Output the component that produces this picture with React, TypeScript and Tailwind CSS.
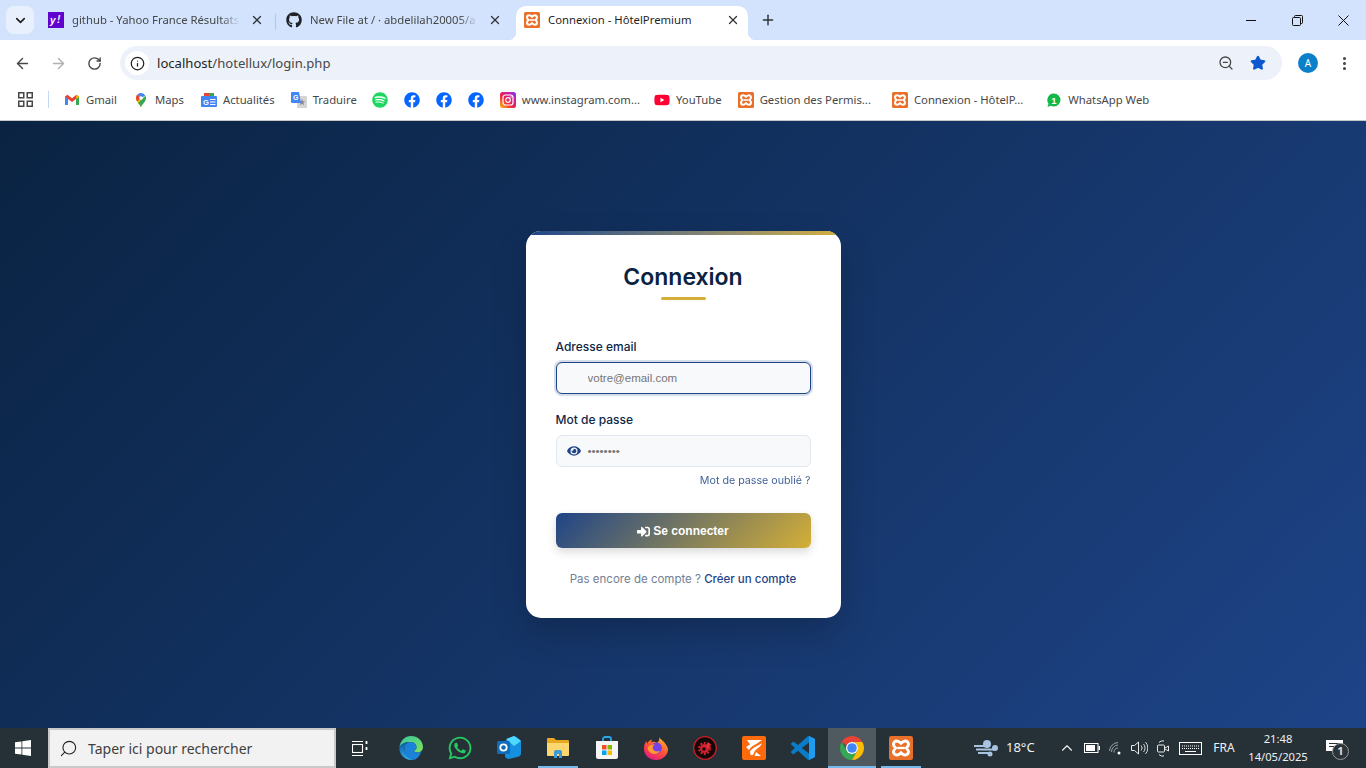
import { FaEye, FaSignInAlt, FaGithub, FaFacebook, FaSpotify, FaYoutube, FaWhatsapp } from "react-icons/fa";
import { ArrowLeft, ArrowRight, RotateCw, Info, Star, ZoomOut, ChevronDown, X, Plus, EllipsisVertical, ChevronUp, Search } from "lucide-react";

function Xampp({ size = 16 }: { size?: number }) {
  return (
    <svg width={size} height={size} viewBox="0 0 16 16" className="shrink-0">
      <rect width="16" height="16" rx="1.5" fill="#e8702a" />
      <path d="M5.2 3.3c-1.300 0-2.200 1-2.200 2.200 0 1 .6 1.700 1.400 2.500-.8.800-1.400 1.500-1.400 2.500 0 1.200.9 2.200 2.200 2.200 1 0 1.900-.7 2.800-1.500.9.800 1.800 1.500 2.800 1.500 1.300 0 2.200-1 2.200-2.200 0-1-.6-1.700-1.400-2.500.8-.8 1.400-1.500 1.400-2.500 0-1.200-.9-2.200-2.200-2.200-1 0-1.900.7-2.800 1.500-.9-.8-1.800-1.500-2.800-1.500z" fill="none" stroke="#fff" strokeWidth="2" />
      <path d="M5.500 8h5" stroke="#fff" strokeWidth="1.600" />
    </svg>
  );
}

function Gmail() {
  return (
    <svg width="16" height="16" viewBox="0 0 16 16" className="shrink-0">
      <path d="M1 4.500V13h3V7l4 3 4-3v6h3V4.500L12.500 2.800 8 6.200 3.500 2.800z" fill="#ea4335" />
      <path d="M1 4.500V13h3V7z" fill="#4285f4" />
      <path d="M15 4.500V13h-3V7z" fill="#34a853" />
      <path d="M15 4.500 12.500 2.800 12 7l3-2z" fill="#fbbc04" />
    </svg>
  );
}

function Maps() {
  return (
    <svg width="16" height="16" viewBox="0 0 16 16" className="shrink-0">
      <path d="M8 15.500C7.500 12.500 3 10 3 6a5 5 0 0 1 1.500-3.500L8 6z" fill="#fbbc04" />
      <path d="M8 15.500c.5-3 5-5.500 5-9.500 0-.8-.2-1.600-.6-2.300L5 11c1.300 1.500 2.700 2.800 3 4.500z" fill="#34a853" />
      <path d="M8 1a5 5 0 0 1 4.400 2.700L8 6 4.500 2.500C5.400 1.600 6.600 1 8 1z" fill="#4285f4" />
      <path d="M4.500 2.500 8 6 4 9.500C3.400 8.400 3 7.300 3 6c0-1.400.6-2.600 1.500-3.500z" fill="#ea4335" />
      <circle cx="8" cy="6" r="1.800" fill="#fff" />
    </svg>
  );
}

function News() {
  return (
    <svg width="16" height="16" viewBox="0 0 16 16" className="shrink-0">
      <path d="M8 1h5v4H8z" fill="#34a853" />
      <path d="M3 1h5v4H3z" fill="#ea4335" />
      <rect y="4" width="16" height="11" rx="1" fill="#4285f4" />
      <text x="2" y="12.500" fontSize="7.500" fontWeight="700" fill="#fff" fontFamily="Liberation Sans">G</text>
      <path d="M9 7.500h5.500M9 10h5.500M9 12.500h5.500" stroke="#fff" strokeWidth="1.100" />
    </svg>
  );
}

function Translate() {
  return (
    <svg width="16" height="16" viewBox="0 0 16 16" className="shrink-0">
      <rect x="6" y="4" width="10" height="12" rx="1" fill="#d5d5d5" />
      <path d="M11 7l1 2.300h2.300l-1.900 1.500.7 2.400-2.100-1.400-2.100 1.400.7-2.400-1.900-1.500H10z" fill="#8a8a8a" />
      <path d="M1 0h7l2 11H1a1 1 0 0 1-1-1V1a1 1 0 0 1 1-1z" fill="#4285f4" />
      <text x="2" y="8" fontSize="7" fontWeight="700" fill="#fff" fontFamily="Liberation Sans">G</text>
    </svg>
  );
}

function Instagram() {
  return (
    <svg width="16" height="16" viewBox="0 0 16 16" className="shrink-0">
      <defs>
        <linearGradient id="ig" x1="0" y1="1" x2="1" y2="0">
          <stop offset="0" stopColor="#fdc41a" />
          <stop offset="0.4" stopColor="#f0263f" />
          <stop offset="0.75" stopColor="#c81fb0" />
          <stop offset="1" stopColor="#6a3df0" />
        </linearGradient>
      </defs>
      <rect width="16" height="16" rx="2.500" fill="url(#ig)" />
      <rect x="3" y="3" width="10" height="10" rx="2.500" fill="none" stroke="#fff" strokeWidth="1.200" />
      <circle cx="8" cy="8" r="2.300" fill="none" stroke="#fff" strokeWidth="1.200" />
      <circle cx="11" cy="5" r=".7" fill="#fff" />
    </svg>
  );
}

function WaBadge() {
  return (
    <svg width="16" height="16" viewBox="0 0 16 16" className="shrink-0">
      <path d="M8 1.500a6.500 6.500 0 0 1 0 13c-1.100 0-2.200-.3-3.100-.8L1.500 15l1-3.300A6.500 6.500 0 0 1 8 1.500z" fill="#12b84a" />
      <text x="8" y="11.500" textAnchor="middle" fontSize="9.500" fontWeight="700" fill="#fff" fontFamily="Liberation Sans">1</text>
    </svg>
  );
}

function YahooIcon() {
  return (
    <svg width="16" height="16" viewBox="0 0 16 16" className="shrink-0">
      <rect width="16" height="16" fill="#5f01d1" />
      <text x="2" y="11.500" fontSize="10" fontWeight="700" fontStyle="italic" fill="#fff" fontFamily="Liberation Sans">y</text>
      <text x="9" y="10.500" fontSize="10" fontWeight="700" fontStyle="italic" fill="#fff" fontFamily="Liberation Sans">!</text>
    </svg>
  );
}

function Tab({ icon, title, active }: { icon: React.ReactNode; title: string; active?: boolean }) {
  return (
    <div className={active ? "relative ml-[3px] flex h-[34px] w-[232px] items-center rounded-t-[10px] bg-white pb-[6px] pl-2 pr-2" : "flex h-[34px] w-[235px] items-center pb-[6px] pl-2 pr-[11px]"}>
      {active && <span className="absolute bottom-0 left-[-8px] h-2 w-2 bg-[radial-gradient(circle_at_0_0,transparent_8px,#fff_8.5px)]" />}
      {active && <span className="absolute bottom-0 right-[-8px] h-2 w-2 bg-[radial-gradient(circle_at_100%_0,transparent_8px,#fff_8.5px)]" />}
      {icon}
      <span className={active ? "ml-2 min-w-0 flex-1 whitespace-nowrap text-[11.3px] text-[#1f1f1f]" : "ml-2 min-w-0 flex-1 whitespace-nowrap text-[11.3px] text-[#444746] [mask-image:linear-gradient(to_right,black_84%,transparent_95%)]"}>{title}</span>
      <X size={14} strokeWidth={2.2} className="ml-[1px] shrink-0 text-[#303336]" />
    </div>
  );
}

function TabStrip() {
  return (
    <div className="flex h-10 items-end bg-[#d3e3fd] pl-[6px]">
      <div className="mb-[6px] mr-[6px] flex h-7 w-7 items-center justify-center rounded-lg bg-[#e8f0fe]">
        <ChevronDown size={15} strokeWidth={2.6} className="text-[#1f1f1f]" />
      </div>
      <Tab icon={<YahooIcon />} title="github - Yahoo France Résultats" />
      <div className="mb-[10px] mr-[2px] h-[16px] w-px bg-[#a8c7fa]" />
      <Tab icon={<FaGithub size={16} className="shrink-0 text-[#1f2328]" />} title="New File at / · abdelilah20005/a" />
      <Tab active icon={<Xampp />} title="Connexion - HôtelPremium" />
      <div className="mb-[8px] ml-2 flex h-6 w-6 items-center justify-center">
        <Plus size={16} strokeWidth={2.2} className="text-[#303336]" />
      </div>
      <div className="ml-auto flex h-10 items-center">
        <div className="flex h-10 w-[46px] items-center justify-center">
          <div className="h-px w-[10px] bg-[#111]" />
        </div>
        <div className="flex h-10 w-[46px] items-center justify-center">
          <svg width="11" height="11" viewBox="0 0 11 11" fill="none" stroke="#111">
            <rect x=".5" y="2.500" width="8" height="8" rx="1" />
            <path d="M2.500 2.500V1.500a1 1 0 0 1 1-1h6a1 1 0 0 1 1 1v6a1 1 0 0 1-1 1h-1" />
          </svg>
        </div>
        <div className="flex h-10 w-[46px] items-center justify-center">
          <svg width="11" height="11" viewBox="0 0 11 11" stroke="#111"><path d="M.5.500l10 10M10.500.500l-10 10" /></svg>
        </div>
      </div>
    </div>
  );
}

function Toolbar() {
  return (
    <div className="flex h-10 items-center rounded-t-[10px] bg-white pl-1 pt-[6px] text-[#474747]">
      <div className="flex w-9 justify-center"><ArrowLeft size={17} strokeWidth={2} /></div>
      <div className="flex w-9 justify-center"><ArrowRight size={17} strokeWidth={2} className="text-[#b0b0b0]" /></div>
      <div className="flex w-9 justify-center"><RotateCw size={15} strokeWidth={2.2} /></div>
      <div className="ml-2 flex h-[34px] w-[1162px] items-center rounded-full bg-[#edf2fa]">
        <div className="ml-[5px] flex h-6 w-6 items-center justify-center rounded-full bg-white">
          <Info size={15} strokeWidth={2} className="text-[#1f1f1f]" />
        </div>
        <span className="ml-2 pt-px text-[13.1px] text-[#474747]"><span className="text-[#1f1f1f]">localhost</span>/hotellux/login.php</span>
        <div className="ml-auto flex w-8 justify-center"><ZoomOut size={16} strokeWidth={2} className="text-[#474747]" /></div>
        <div className="mr-2 flex w-8 justify-center"><Star size={16} fill="#0b57d0" className="text-[#0b57d0]" /></div>
      </div>
      <div className="ml-2 flex w-9 justify-center">
        <div className="flex h-5 w-5 items-center justify-center rounded-full bg-[#0b80c9] text-[10px] text-white">A</div>
      </div>
      <div className="flex w-9 justify-center"><EllipsisVertical size={17} strokeWidth={2.4} className="text-[#474747]" /></div>
    </div>
  );
}

function Bookmark({ icon, label, ml = "" }: { icon: React.ReactNode; label?: string; ml?: string }) {
  return (
    <div className={"flex shrink-0 items-center " + ml}>
      {icon}
      {label && <span className="ml-[6px] whitespace-nowrap pt-px text-[11.3px] text-[#474747]">{label}</span>}
    </div>
  );
}

function Bookmarks() {
  return (
    <div className="flex h-[41px] items-center border-b border-[#c7c7c7] bg-white pl-[18px] pb-px">
      <svg width="15" height="15" viewBox="0 0 15 15" fill="none" stroke="#474747" strokeWidth="1.500" className="shrink-0">
        <rect x=".75" y=".75" width="5" height="5" /><rect x="9.250" y=".75" width="5" height="5" />
        <rect x=".75" y="9.250" width="5" height="5" /><rect x="9.250" y="9.250" width="5" height="5" />
      </svg>
      <div className="ml-[15px] mr-[15px] h-[17px] w-px bg-[#c4d7f5]" />
      <Bookmark icon={<Gmail />} label="Gmail" />
      <Bookmark ml="ml-[16px]" icon={<Maps />} label="Maps" />
      <Bookmark ml="ml-[17px]" icon={<News />} label="Actualités" />
      <Bookmark ml="ml-[16px]" icon={<Translate />} label="Traduire" />
      <Bookmark ml="ml-[15px]" icon={<FaSpotify size={16} className="text-[#1ed760]" />} />
      <Bookmark ml="ml-[16px]" icon={<FaFacebook size={16} className="text-[#0866ff]" />} />
      <Bookmark ml="ml-[16px]" icon={<FaFacebook size={16} className="text-[#0866ff]" />} />
      <Bookmark ml="ml-[16px]" icon={<FaFacebook size={16} className="text-[#0866ff]" />} />
      <Bookmark ml="ml-[16px]" icon={<Instagram />} label="www.instagram.com..." />
      <Bookmark ml="ml-[14px]" icon={<FaYoutube size={16} className="text-[#ff0033]" />} label="YouTube" />
      <Bookmark ml="ml-[16px]" icon={<Xampp />} label="Gestion des Permis..." />
      <Bookmark ml="ml-[21px]" icon={<Xampp />} label="Connexion - HôtelP..." />
      <Bookmark ml="ml-[23px]" icon={<WaBadge />} label="WhatsApp Web" />
    </div>
  );
}

function LoginCard() {
  return (
    <div className="relative w-[315px] overflow-hidden rounded-[15px] bg-white px-[30px] pt-[30px] pb-[30px] shadow-[0_15px_35px_rgba(0,0,0,0.2)] font-['Inter',sans-serif]">
      <div className="absolute left-0 right-0 top-0 h-[4px] bg-gradient-to-r from-[#1e4488] to-[#d4af37]" />
      <h1 className="pt-px text-center text-[23px] leading-[31px] font-semibold text-[#0a2342]">Connexion</h1>
      <div className="mx-auto mt-[4px] h-[3px] w-[45px] rounded-full bg-[#d4af37]" />
      <label className="mt-[38px] block text-[12px] leading-[18px] font-medium text-[#0f2747]">Adresse email</label>
      <input
        readOnly
        placeholder="votre@email.com"
        className="mt-[6px] block h-[32px] w-full rounded-[6px] border border-[#1e4488] bg-[#f8f9fa] pl-[31px] font-['Liberation_Sans',sans-serif] text-[11.5px] shadow-[0_0_0_2px_rgba(30,68,136,0.18)] outline-none placeholder:text-[#757575]"
      />
      <label className="mt-[17px] block text-[12px] leading-[18px] font-medium text-[#0f2747]">Mot de passe</label>
      <div className="relative mt-[6px]">
        <FaEye size={14} className="absolute left-[11px] top-[9px] text-[#1e4488]" />
        <input
          readOnly
          type="password"
          value="password"
          className="block h-[32px] w-full rounded-[6px] border border-[#e2e8f0] bg-[#f8f9fa] pl-[31px] font-['Liberation_Sans',sans-serif] text-[11.5px] text-[#757575] outline-none"
        />
      </div>
      <div className="mt-[7px] text-right text-[10.7px] leading-[14px] text-[#1e4488] opacity-85">Mot de passe oublié ?</div>
      <button className="mt-[25px] flex h-[35px] w-full items-center justify-center gap-[3px] rounded-[6px] bg-[linear-gradient(135deg,#1e4488,#d4af37)] pt-px font-['Liberation_Sans',sans-serif] text-[12px] font-bold text-white shadow-[0_4px_10px_rgba(0,0,0,0.15)]">
        <FaSignInAlt size={13} />
        Se connecter
      </button>
      <p className="mt-[22px] text-center text-[11.5px] leading-[18px] text-[#718096]">
        Pas encore de compte ? <span className="font-medium text-[#1e4488]">Créer un compte</span>
      </p>
    </div>
  );
}

function TaskIcon({ children, under }: { children: React.ReactNode; under?: "short" | "full" }) {
  return (
    <div className="relative flex h-10 w-[49px] shrink-0 items-center justify-center">
      {under === "full" && <span className="absolute inset-y-0 left-px right-0 bg-[#4f5a60]" />}
      <span className="relative flex">{children}</span>
      {under === "short" && <span className="absolute bottom-0 left-[5px] h-[2px] w-10 bg-[#76b9ed]" />}
      {under === "full" && <span className="absolute bottom-0 left-px right-0 h-[2px] bg-[#76b9ed]" />}
    </div>
  );
}

function Taskbar() {
  return (
    <div className="flex h-10 items-center bg-[#253137] text-white">
      <div className="flex h-10 w-12 shrink-0 items-center justify-center pr-[2px]">
        <svg width="16" height="16" viewBox="0 0 16 16" fill="#fff">
          <path d="M0 2.300 6.500 1.400v6.200H0zM7.300 1.300 16 0v7.600H7.300zM0 8.400h6.500v6.200L0 13.700zM7.300 8.400H16V16l-8.700-1.300z" />
        </svg>
      </div>
      <div className="flex h-10 w-[288px] shrink-0 items-center border-2 border-[#c9c9c9] bg-[#f2f2f2] pl-[9px] font-['Noto_Sans',sans-serif] text-[14px] text-[#3f3f3f]">
        <Search size={19} strokeWidth={1.400} className="-scale-x-100 text-[#222]" />
        <span className="ml-[10px]">Taper ici pour rechercher</span>
      </div>
      <div className="ml-px flex h-10 w-[49px] shrink-0 items-center justify-center pr-1">
        <svg width="16" height="15" viewBox="0 0 16 15" fill="none" stroke="#fff" strokeWidth="1.100">
          <path d="M0 .5h11M0 14.500h11" /><rect x=".5" y="3.500" width="10" height="8" /><path d="M14.500 0v3M14.500 6v3" strokeWidth="1.800" />
        </svg>
      </div>
      <TaskIcon>
        <svg width="24" height="24" viewBox="0 0 24 24">
          <defs>
            <linearGradient id="ed1" x1="0" y1="0" x2="1" y2="1"><stop offset="0" stopColor="#36c8a0" /><stop offset="1" stopColor="#7fe05a" /></linearGradient>
            <linearGradient id="ed2" x1="0" y1="0" x2="0" y2="1"><stop offset="0" stopColor="#0c59a4" /><stop offset="1" stopColor="#2fa8e8" /></linearGradient>
          </defs>
          <path d="M12 0c6.600 0 12 4.800 12 11 0 3.500-2.700 5.500-5.500 5.500-2 0-3.500-1-3.500-2 1.500-.5 2.500-1.500 2.500-3C17.500 8 15 6 11 6 6 6 1.500 9 .4 11 1.500 4.500 6 0 12 0z" fill="url(#ed1)" />
          <path d="M.4 11C1.500 8 6 6 10.500 6c-4 1-5.500 4.500-5 8 .5 4.500 4 8.500 9 9.800C13.700 24 12.800 24 12 24 5.500 24 0 18.500.4 11z" fill="url(#ed2)" />
          <path d="M10.500 6c4.500-.5 7 2 7 5.500 0 1.500-1 2.500-2.500 3 0 1 1.500 2 3.500 2 1.500 0 3-.5 4-1.500C21 20 17.500 24 14.500 23.800 9.500 22.500 6 18.500 5.500 14 5 10.500 6.500 7 10.500 6z" fill="#1a82d8" />
        </svg>
      </TaskIcon>
      <TaskIcon><FaWhatsapp size={26} className="text-[#25c861]" /></TaskIcon>
      <TaskIcon>
        <svg width="24" height="24" viewBox="0 0 24 24">
          <path d="M8 5 17 0c3 1 5 2.500 7 5v12c0 2-1 3-2 3.500L12 23c-2 0-3.500-1-4-3z" fill="#1490df" />
          <path d="M9 3l8-3 7 5-7 5z" fill="#50d9ff" />
          <rect y="5" width="13" height="13" rx="1.500" fill="#0f6cbd" />
          <circle cx="6.500" cy="11.500" r="3.200" fill="none" stroke="#fff" strokeWidth="1.800" />
        </svg>
      </TaskIcon>
      <TaskIcon under="short">
        <svg width="22" height="20" viewBox="0 0 22 20">
          <path d="M0 1a1 1 0 0 1 1-1h6l2 2h12a1 1 0 0 1 1 1v3H0z" fill="#e8a820" />
          <path d="M0 5h22v12a1 1 0 0 1-1 1H1a1 1 0 0 1-1-1z" fill="#fcd770" />
          <path d="M7 14a2 2 0 0 1 2-2h4a2 2 0 0 1 2 2v6h-3v-4h-2v4H7z" fill="#3f9ad8" />
        </svg>
      </TaskIcon>
      <TaskIcon>
        <svg width="24" height="24" viewBox="0 0 24 24">
          <path d="M8 6V3a2 2 0 0 1 2-2h4a2 2 0 0 1 2 2v3" fill="none" stroke="#28a8ea" strokeWidth="1.800" />
          <path d="M1 5h22v16a2 2 0 0 1-2 2H3a2 2 0 0 1-2-2z" fill="#f5f5f5" />
          <rect x="7" y="9" width="4.500" height="4.500" fill="#f25022" /><rect x="12.500" y="9" width="4.500" height="4.500" fill="#7fba00" />
          <rect x="7" y="14.500" width="4.500" height="4.500" fill="#00a4ef" /><rect x="12.500" y="14.500" width="4.500" height="4.500" fill="#ffb900" />
        </svg>
      </TaskIcon>
      <TaskIcon>
        <svg width="24" height="24" viewBox="0 0 24 24">
          <defs>
            <linearGradient id="ff" x1="0.8" y1="0" x2="0.2" y2="1"><stop offset="0" stopColor="#ffbd2e" /><stop offset="0.5" stopColor="#ff5634" /><stop offset="1" stopColor="#e31587" /></linearGradient>
          </defs>
          <path d="M15 0c.5 3 3 3.500 5 6 2.500 3 4 6 4 7 0 6-5 11-12 11S0 19 0 13C0 9 1 6.500 2.500 5L3 8c1-2.500 3-4 5-4.500L7 6c2-.5 5 0 6 1 2-2 3-4 2-7z" fill="url(#ff)" />
          <circle cx="12.500" cy="12" r="5.500" fill="#7542e5" />
          <path d="M4 11c2-2 5-3 7-2 -2 .5-3 2-2 4 1 2.500 4 3 7 2-2 3-6 4-9 2s-4-4-3-6z" fill="#ff9a2e" />
        </svg>
      </TaskIcon>
      <TaskIcon>
        <svg width="24" height="24" viewBox="0 0 24 24">
          <circle cx="12" cy="12" r="11.300" fill="#140808" stroke="#c8202a" strokeWidth="1.300" />
          <circle cx="11.500" cy="12.500" r="4.500" fill="#d3222d" />
          <circle cx="11.500" cy="12.500" r="5.500" fill="none" stroke="#d3222d" strokeWidth="1.800" strokeDasharray="2 1.500" />
          <circle cx="11" cy="13" r="1.800" fill="#140808" />
          <path d="M13 10l2-4 3.500 3-2 .8-.5 3.200z" fill="#e8303a" />
        </svg>
      </TaskIcon>
      <TaskIcon>
        <svg width="24" height="24" viewBox="0 0 24 24">
          <rect width="24" height="24" rx="2" fill="#ff6a0d" />
          <path d="M5 4h15l-5 3.500C12 9 9 10.500 7 14L4 11l4-2.500zM20 7c-1 4-5 5-7.500 8.500L11 19H8.500L8 15.500C11 11 16 10 20 7zM14 16l5 4h-6.500z" fill="#fff" />
        </svg>
      </TaskIcon>
      <TaskIcon>
        <svg width="24" height="24" viewBox="0 0 100 100">
          <path fillRule="evenodd" d="M70.900 99.300a6.200 6.200 0 0 0 5-.2l20.600-9.900a6.200 6.200 0 0 0 3.500-5.600V16.400a6.200 6.200 0 0 0-3.500-5.600L75.900.9a6.200 6.200 0 0 0-7.100 1.200L29.400 38 12.200 25a4.200 4.200 0 0 0-5.300.2l-5.500 5.100a4.200 4.200 0 0 0 0 6.200L16.300 50 1.400 63.500a4.200 4.200 0 0 0 0 6.200l5.500 5a4.200 4.200 0 0 0 5.300.2l17.200-13 39.400 35.900a6.200 6.200 0 0 0 2.100 1.500zM75 27.300 45.100 50 75 72.700z" fill="#0a7cc7" />
          <path d="M75 .5l21.500 10.300a6.200 6.200 0 0 1 3.500 5.600v67.200a6.200 6.200 0 0 1-3.500 5.600L75 99.500z" fill="#1f9cf0" />
        </svg>
      </TaskIcon>
      <TaskIcon under="full">
        <svg width="24" height="24" viewBox="4 4 40 40">
          <path d="M6.680 14A20 20 0 0 1 41.320 14H24A10 10 0 0 0 15.340 19Z" fill="#ea4335" />
          <path d="M6.680 14A20 20 0 0 0 24 44L32.660 29A10 10 0 0 1 15.340 29Z" fill="#34a853" />
          <path d="M41.320 14A20 20 0 0 1 24 44L32.660 29A10 10 0 0 0 24 14Z" fill="#fbbc04" />
          <circle cx="24" cy="24" r="10" fill="#fff" />
          <circle cx="24" cy="24" r="8" fill="#4285f4" />
        </svg>
      </TaskIcon>
      <TaskIcon under="short"><Xampp size={24} /></TaskIcon>
      <div className="ml-auto flex w-[396px] shrink-0 items-center font-['Noto_Sans',sans-serif] text-[#f0f0f0]">
        <div className="flex w-[31px] justify-center">
          <svg width="24" height="18" viewBox="0 0 24 18">
            <circle cx="13" cy="5" r="4" fill="#a8c4e0" />
            <circle cx="21" cy="9" r="3" fill="#a8c4e0" />
            <path d="M0 7h12M2 10.500h18M4 14h12" stroke="#a8c4e0" strokeWidth="1.800" />
            <circle cx="16" cy="15" r="2.500" fill="#a8c4e0" />
          </svg>
        </div>
        <span className="ml-[5px] w-[48px] text-[13px]">18°C</span>
        <div className="flex w-[25px] justify-center"><ChevronUp size={18} strokeWidth={1.500} /></div>
        <div className="flex w-[25px] justify-center">
          <svg width="16" height="10" viewBox="0 0 16 10"><rect x=".5" y=".5" width="13.500" height="9" fill="none" stroke="#fff" /><rect x="2" y="2" width="9" height="6" fill="#fff" /><rect x="14.500" y="3" width="1.500" height="4" fill="#fff" /></svg>
        </div>
        <div className="flex w-[23px] justify-center">
          <svg width="13" height="13" viewBox="0 0 13 13" fill="none" stroke="#9aa3a8"><path d="M.5 9A9 9 0 0 1 9 .5M2.500 10A7 7 0 0 1 9 3M5 10.500A4 4 0 0 1 9 6" /><circle cx="10" cy="11" r="1.500" fill="#fff" stroke="none" /></svg>
        </div>
        <div className="flex w-[24px] justify-center">
          <svg width="17" height="14" viewBox="0 0 17 14" fill="none" stroke="#e8e8e8"><path d="M.5 4.500h3L7.500 1v12l-4-3.500h-3z" /><path d="M10 4.500a3.500 3.500 0 0 1 0 5M12.500 3a6 6 0 0 1 0 8M14.500 1a9 9 0 0 1 0 12" strokeWidth=".9" /></svg>
        </div>
        <div className="flex w-[23px] justify-center">
          <svg width="12" height="17" viewBox="0 0 12 17" fill="none" stroke="#e8e8e8"><path d="M2 2.500a5 5 0 0 1 5-1.500M2 14.500a5 5 0 0 0 5 1.500" /><rect x=".5" y="5" width="7" height="7" rx="1" /><path d="M8 8l3.500-2v5L8 9" /></svg>
        </div>
        <div className="flex w-[32px] justify-center">
          <svg width="23" height="13" viewBox="0 0 23 13" fill="none" stroke="#fff"><rect x=".5" y=".5" width="22" height="12" /><path d="M3 4h17M3 6.500h17" strokeDasharray="1 1" /><path d="M6 9.500h11" /></svg>
        </div>
        <span className="w-[36px] text-center text-[12px]">FRA</span>
        <div className="w-[72px] text-center text-[11.2px] leading-[18px]">
          <div>21:48</div>
          <div>14/05/2025</div>
        </div>
        <div className="relative flex h-10 w-[42px] justify-center pt-[12px]">
          <svg width="17" height="15" viewBox="0 0 17 15" fill="#fff" className="mr-[1px]"><path d="M0 0h17v11h-5l-3 3-3-3H0z" /><path d="M3 3.500h11M3 6.500h11" stroke="#253137" strokeWidth="1" /></svg>
          <span className="absolute left-[18px] top-[15px] flex h-[17px] w-[17px] items-center justify-center rounded-full border border-[#9a9a9a] bg-[#2b3338] text-[11px] font-bold text-[#ddd]">1</span>
        </div>
        <div className="w-[10px]" />
      </div>
    </div>
  );
}

export default function App() {
  return (
    <div className="flex h-[768px] w-[1366px] flex-col overflow-hidden font-['Noto_Sans',sans-serif]">
      <TabStrip />
      <Toolbar />
      <Bookmarks />
      <main className="flex flex-1 items-center justify-center bg-[linear-gradient(135deg,#0a2342,#1e4488)]">
        <LoginCard />
      </main>
      <Taskbar />
    </div>
  );
}
